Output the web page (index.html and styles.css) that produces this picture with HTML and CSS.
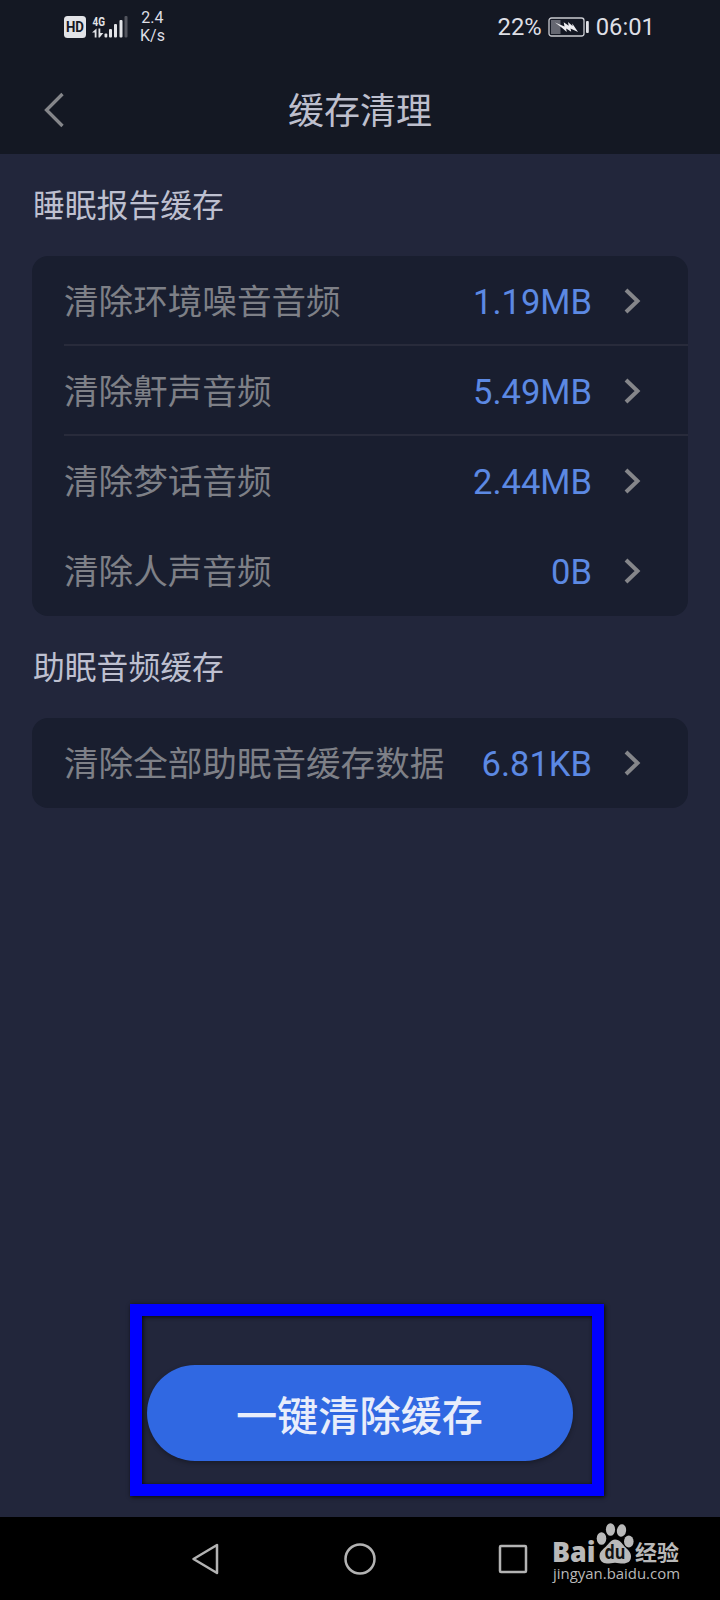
FILE: index.html
```html
<!DOCTYPE html>
<html lang="zh-CN">
<head>
<meta charset="utf-8">
<title>缓存清理</title>
<link rel="stylesheet" href="styles.css">
</head>
<body>
<div class="screen">
  <header class="header">
    <div class="status">
      <svg class="hd" width="22" height="22" viewBox="0 0 22 22"><rect width="22" height="22" rx="3.5" fill="#e2e3e7"/><text x="11" y="16.2" text-anchor="middle" textLength="18" lengthAdjust="spacingAndGlyphs" class="hd-text">HD</text></svg>
      <svg class="signal" width="38" height="26" viewBox="0 0 38 26">
        <text x="0.5" y="11.5" textLength="12.500" lengthAdjust="spacingAndGlyphs" class="net-text">4G</text>
        <g fill="#e2e3e7">
          <path d="M2.700 23.500v-5H0l4.500-4v9zM6.500 14.500h1.800v4.500h3l-3.600 4.500H6.500z"/>
          <rect x="12.500" y="19.500" width="2.800" height="4" rx="1"/>
          <rect x="17" y="15" width="3" height="8.500" rx="1"/>
          <rect x="22" y="10" width="3" height="13.500" rx="1"/>
          <rect x="27.500" y="6" width="3" height="17.500" rx="1"/>
        </g>
        <rect x="32.500" y="2" width="3" height="21.500" rx="1" fill="#53555e"/>
      </svg>
      <div class="speed"><span>2.4</span><span>K/s</span></div>
      <div class="status-right">
        <span>22%</span>
        <svg width="42" height="20" viewBox="0 0 42 20">
          <rect x="1" y="1" width="35" height="18" rx="2.500" fill="none" stroke="#c9cad0" stroke-width="1.300"/>
          <rect x="3" y="3" width="9.500" height="14" fill="#656771"/>
          <path d="M7 5.500l9.500 4-.8-4.200 5 3.500-.7-3.800 4.500 4-.2-2.500 5.700 8.500-7.500-3.500.7 3.300-5-3.300.5 3.500-4.500-4z" fill="#eeeef1"/>
          <rect x="38" y="4" width="2.800" height="12" rx="1" fill="#e2e3e7"/>
        </svg>
        <span class="time">06:01</span>
      </div>
    </div>
    <div class="titlebar">
      <svg class="back" width="24" height="38" viewBox="0 0 24 38"><path d="M20.500 3L4.500 19l16 16" fill="none" stroke="#85868a" stroke-width="3.300"/></svg>
      <h1 class="title">缓存清理</h1>
    </div>
  </header>

  <main class="content">
    <h2 class="section">睡眠报告缓存</h2>
    <div class="card">
      <div class="row line"><span class="label">清除环境噪音音频</span><span class="size">1.19MB</span><svg class="chevron" viewBox="0 0 18 28"><path d="M2 3l11.500 11L2 25" /></svg></div>
      <div class="row line"><span class="label">清除鼾声音频</span><span class="size">5.49MB</span><svg class="chevron" viewBox="0 0 18 28"><path d="M2 3l11.500 11L2 25" /></svg></div>
      <div class="row"><span class="label">清除梦话音频</span><span class="size">2.44MB</span><svg class="chevron" viewBox="0 0 18 28"><path d="M2 3l11.500 11L2 25" /></svg></div>
      <div class="row"><span class="label">清除人声音频</span><span class="size">0B</span><svg class="chevron" viewBox="0 0 18 28"><path d="M2 3l11.500 11L2 25" /></svg></div>
    </div>
    <h2 class="section">助眠音频缓存</h2>
    <div class="card">
      <div class="row"><span class="label">清除全部助眠音缓存数据</span><span class="size">6.81KB</span><svg class="chevron" viewBox="0 0 18 28"><path d="M2 3l11.500 11L2 25" /></svg></div>
    </div>
    <button class="clear">一键清除缓存</button>
  </main>

  <nav class="nav">
    <svg width="32" height="34" viewBox="0 0 32 34"><path d="M27 3v28L3.500 17z"/></svg>
    <svg width="34" height="34" viewBox="0 0 34 34"><circle cx="17" cy="17" r="14.500"/></svg>
    <svg width="32" height="32" viewBox="0 0 32 32"><rect x="3" y="3" width="26" height="26" rx="1"/></svg>
  </nav>

  <div class="highlight"></div>
  <div class="watermark">
    <svg width="132" height="64" viewBox="0 0 132 64">
      <g fill="#b9b9b9">
        <text x="1" y="41" textLength="43.500" lengthAdjust="spacingAndGlyphs" class="wm-bai">Bai</text>
        <ellipse cx="50.500" cy="17.500" rx="4.800" ry="6.300"/>
        <ellipse cx="59.500" cy="8.500" rx="4.600" ry="6.300"/>
        <ellipse cx="70.500" cy="9.500" rx="4.600" ry="6.300" transform="rotate(8 70.500 9.500)"/>
        <ellipse cx="77.800" cy="20.500" rx="4.800" ry="6"/>
        <path d="M64 18.500c5 0 7 4 9.500 7 3 3 6.500 5.500 6.500 10 0 5-3.500 7-8 7-3 0-5-.8-8-.8s-5 .8-8 .8c-4.500 0-7.500-3-7.500-7.500s3.500-6.500 6.500-9.500c3-3 5-7 9-7z"/>
        <text x="84" y="39" textLength="44" lengthAdjust="spacingAndGlyphs" class="wm-cn">经验</text>
        <text x="2" y="58" textLength="127" lengthAdjust="spacingAndGlyphs" class="wm-url">jingyan.baidu.com</text>
      </g>
      <text x="53.500" y="38" textLength="21" lengthAdjust="spacingAndGlyphs" class="wm-du">du</text>
    </svg>
  </div>
</div>
</body>
</html>
```
FILE: styles.css
```css
* { box-sizing: border-box; }
body {
  margin: 0;
  background: #22263b;
  font-family: Roboto, "Noto Sans CJK SC", sans-serif;
}
svg { display: block; flex: none; }
.screen {
  position: relative;
  width: 720px;
  height: 1600px;
  display: flex;
  flex-direction: column;
  overflow: hidden;
}
.header { height: 154px; background: #141823; flex: none; }
.status {
  height: 54px;
  padding: 0 65px 0 64px;
  display: flex;
  align-items: center;
  color: #dedfe5;
}
.hd { margin-right: 6px; }
.hd-text { font: 700 14.500px Roboto, sans-serif; fill: #151823; }
.net-text { font: 700 13px Roboto, sans-serif; fill: #e2e3e7; }
.signal { margin-right: 10px; }
.speed {
  display: flex;
  flex-direction: column;
  align-items: center;
  font-size: 16px;
  line-height: 18px;
}
.status-right {
  margin-left: auto;
  display: flex;
  align-items: center;
  gap: 6px;
  font-size: 23.800px;
}
.titlebar {
  height: 100px;
  padding: 12px 42px 0;
  display: grid;
  grid-template-columns: 24px 1fr 24px;
  align-items: center;
}
.title {
  margin: 0;
  padding-top: 3px;
  font-size: 36px;
  line-height: 52px;
  font-weight: 400;
  text-align: center;
  color: #bdbfcd;
}
.content {
  flex: 1;
  padding: 0 32px;
  display: flex;
  flex-direction: column;
}
.section {
  margin: 0;
  padding: 1px 0 0 1px;
  height: 102px;
  line-height: 102px;
  font-size: 31.800px;
  font-weight: 400;
  color: #bec0d0;
}
.card { border-radius: 16px; background: #191e2f; }
.row {
  height: 90px;
  margin-left: 32px;
  padding-right: 46px;
  display: flex;
  align-items: center;
  font-size: 34.500px;
}
.line { box-shadow: inset 0 -2px #282b3b; }
.label { color: #7e8087; flex: 1; white-space: nowrap; padding-bottom: 4px; font-size: 34.600px; }
.size { color: #5c89e3; margin-right: 32px; padding-top: 2px; }
.chevron {
  width: 18px;
  height: 28px;
  fill: none;
  stroke: #85868a;
  stroke-width: 4;
}
.clear {
  width: 426px;
  height: 96px;
  margin: auto auto 56px 115px;
  padding: 0 1px 1px 0;
  border: 0;
  border-radius: 48px;
  background: #3068e2;
  box-shadow: 0 2px 5px rgba(0, 0, 0, .3);
  color: #e8edfb;
  font-family: inherit;
  font-size: 41.200px;
  font-weight: 500;
}
.nav {
  height: 83px;
  padding: 0 191px 0 190px;
  display: flex;
  align-items: center;
  justify-content: space-between;
  background: #000;
}
.nav svg {
  fill: none;
  stroke: #b3b3b3;
  stroke-width: 2.500;
  stroke-linejoin: round;
}
.highlight {
  position: absolute;
  left: 130px;
  top: 1304px;
  width: 474px;
  height: 192px;
  border: 12px solid #00f;
  box-shadow: 1px 1px 4px rgba(0, 0, 0, .8), inset 1px 1px 4px rgba(0, 0, 0, .8);
}
.watermark { position: absolute; left: 551px; top: 1521px; }
.wm-bai { font: 800 28px "Open Sans", sans-serif; }
.wm-du { font: 700 20px "Open Sans", sans-serif; fill: #111; }
.wm-cn { font: 700 21px "Noto Sans CJK SC", sans-serif; }
.wm-url { font: 400 14.500px "Open Sans", sans-serif; }
```
